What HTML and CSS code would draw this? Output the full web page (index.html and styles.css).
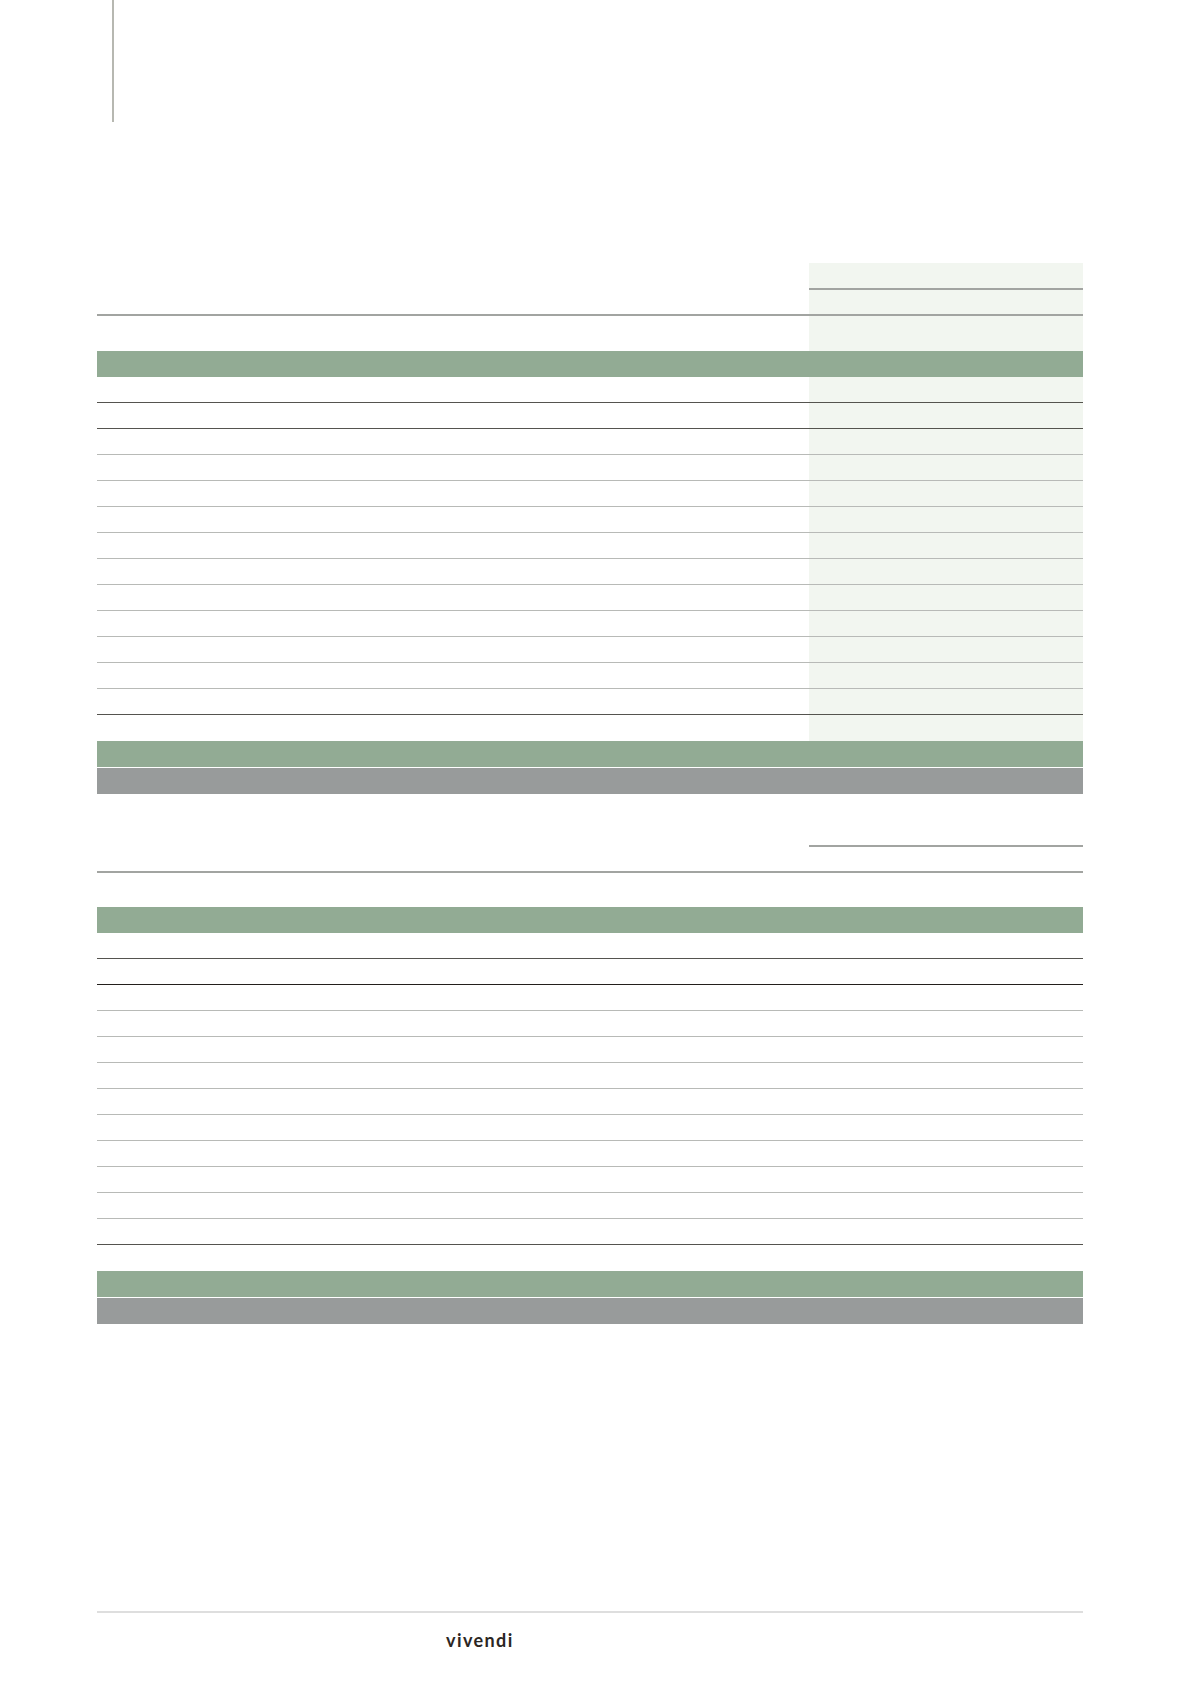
FILE: index.html
```html
<!DOCTYPE html>
<html lang="fr">
<head>
<meta charset="utf-8">
<title>Vivendi</title>
<link rel="stylesheet" href="styles.css">
</head>
<body>
<div class="topline"></div>
<main class="content">
  <section class="tbl first">
    <div class="row h1"><div></div><div></div><div class="t hl"></div><div class="t hl"></div><div class="t hl"></div></div>
    <div class="row h2"><div></div><div></div><div class="t"></div><div class="t"></div><div class="t"></div></div>
    <div class="row spacer"><div></div><div></div><div class="t"></div><div class="t"></div><div class="t"></div></div>
    <div class="band green"></div>
    <div class="row d dark"><div></div><div></div><div class="t"></div><div class="t"></div><div class="t"></div></div>
    <div class="row d dark"><div></div><div></div><div class="t"></div><div class="t"></div><div class="t"></div></div>
    <div class="row d"><div></div><div></div><div class="t"></div><div class="t"></div><div class="t"></div></div>
    <div class="row d"><div></div><div></div><div class="t"></div><div class="t"></div><div class="t"></div></div>
    <div class="row d"><div></div><div></div><div class="t"></div><div class="t"></div><div class="t"></div></div>
    <div class="row d"><div></div><div></div><div class="t"></div><div class="t"></div><div class="t"></div></div>
    <div class="row d"><div></div><div></div><div class="t"></div><div class="t"></div><div class="t"></div></div>
    <div class="row d"><div></div><div></div><div class="t"></div><div class="t"></div><div class="t"></div></div>
    <div class="row d"><div></div><div></div><div class="t"></div><div class="t"></div><div class="t"></div></div>
    <div class="row d"><div></div><div></div><div class="t"></div><div class="t"></div><div class="t"></div></div>
    <div class="row d"><div></div><div></div><div class="t"></div><div class="t"></div><div class="t"></div></div>
    <div class="row d"><div></div><div></div><div class="t"></div><div class="t"></div><div class="t"></div></div>
    <div class="row d dark"><div></div><div></div><div class="t"></div><div class="t"></div><div class="t"></div></div>
    <div class="row e"><div></div><div></div><div class="t"></div><div class="t"></div><div class="t"></div></div>
    <div class="band green"></div>
    <div class="band gray"></div>
  </section>

  <section class="tbl second">
    <div class="row h1"><div></div><div></div><div class="hl"></div><div class="hl"></div><div class="hl"></div></div>
    <div class="row h2"><div></div><div></div><div></div><div></div><div></div></div>
    <div class="row spacer2"><div></div><div></div><div></div><div></div><div></div></div>
    <div class="band green"></div>
    <div class="row d dark"><div></div><div></div><div></div><div></div><div></div></div>
    <div class="row d black"><div></div><div></div><div></div><div></div><div></div></div>
    <div class="row d"><div></div><div></div><div></div><div></div><div></div></div>
    <div class="row d"><div></div><div></div><div></div><div></div><div></div></div>
    <div class="row d"><div></div><div></div><div></div><div></div><div></div></div>
    <div class="row d"><div></div><div></div><div></div><div></div><div></div></div>
    <div class="row d"><div></div><div></div><div></div><div></div><div></div></div>
    <div class="row d"><div></div><div></div><div></div><div></div><div></div></div>
    <div class="row d"><div></div><div></div><div></div><div></div><div></div></div>
    <div class="row d"><div></div><div></div><div></div><div></div><div></div></div>
    <div class="row d"><div></div><div></div><div></div><div></div><div></div></div>
    <div class="row d dark"><div></div><div></div><div></div><div></div><div></div></div>
    <div class="row e"><div></div><div></div><div></div><div></div><div></div></div>
    <div class="band green"></div>
    <div class="band gray"></div>
  </section>
</main>
<footer class="footer">
  <div class="logo">vivendi</div>
</footer>
</body>
</html>
```

FILE: styles.css
```css
html, body {
  margin: 0;
  padding: 0;
  background: #ffffff;
  font-family: "Liberation Sans", Arial, sans-serif;
}

.topline {
  margin-left: 112px;
  width: 2px;
  height: 122px;
  background: #b7b8b1;
}

.content {
  margin-left: 97px;
  width: 986px;
  margin-top: 141px;
}

.tbl + .tbl {
  margin-top: 26px;
}

.row {
  display: grid;
  grid-template-columns: 661px 51px 91px 91px 92px;
  box-sizing: border-box;
}

.row > div {
  box-sizing: border-box;
}

.t {
  background: #f2f6f0;
}

.h1 {
  height: 27px;
}

.hl {
  border-bottom: 2px solid #a2a4a1;
}

.h2 {
  height: 26px;
  border-bottom: 2px solid #a2a4a1;
}

.spacer {
  height: 35px;
}

.spacer2 {
  height: 34px;
}

.band {
  height: 26px;
}

.green {
  background: #92ab94;
}

.gray {
  background: #989b9b;
  margin-top: 1px;
}

.d {
  height: 26px;
  border-bottom: 1px solid #b8bab7;
}

.d.dark {
  border-bottom: 1px solid #55544f;
}

.d.black {
  border-bottom: 1px solid #231f1c;
}

.e {
  height: 26px;
}

.footer {
  margin-left: 97px;
  width: 986px;
  margin-top: 287px;
  border-top: 2px solid #dedede;
  padding-left: 349px;
  box-sizing: border-box;
}

.logo {
  margin-top: 18px;
  font-family: "Lato", "Liberation Sans", sans-serif;
  font-weight: 700;
  font-size: 18px;
  line-height: 18px;
  letter-spacing: 1.4px;
  color: #2b2623;
}
```
